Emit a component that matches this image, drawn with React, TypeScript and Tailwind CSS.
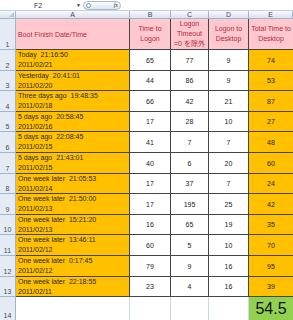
import { } from 'react'

type Row = {
  n: number
  label: string
  date: string
  logon: number
  timeout: number
  desktop: number
  total: number
  tall: boolean
}

const rows: Row[] = [
  { n: 2, label: 'Today  21:16:50', date: '2011/02/21', logon: 65, timeout: 77, desktop: 9, total: 74, tall: true },
  { n: 3, label: 'Yesterday  20:41:01', date: '2011/02/20', logon: 44, timeout: 86, desktop: 9, total: 53, tall: false },
  { n: 4, label: 'Three days ago  19:48:35', date: '2011/02/18', logon: 66, timeout: 42, desktop: 21, total: 87, tall: true },
  { n: 5, label: '5 days ago  20:58:45', date: '2011/02/16', logon: 17, timeout: 28, desktop: 10, total: 27, tall: false },
  { n: 6, label: '5 days ago  22:08:45', date: '2011/02/15', logon: 41, timeout: 7, desktop: 7, total: 48, tall: true },
  { n: 7, label: '5 days ago  21:43:01', date: '2011/02/15', logon: 40, timeout: 6, desktop: 20, total: 60, tall: true },
  { n: 8, label: 'One week later  21:05:53', date: '2011/02/14', logon: 17, timeout: 37, desktop: 7, total: 24, tall: false },
  { n: 9, label: 'One week later  21:50:00', date: '2011/02/13', logon: 17, timeout: 195, desktop: 25, total: 42, tall: true },
  { n: 10, label: 'One week later  15:21:20', date: '2011/02/13', logon: 16, timeout: 65, desktop: 19, total: 35, tall: false },
  { n: 11, label: 'One week later  13:46:11', date: '2011/02/12', logon: 60, timeout: 5, desktop: 10, total: 70, tall: true },
  { n: 12, label: 'One week later  0:17:45', date: '2011/02/12', logon: 79, timeout: 9, desktop: 16, total: 95, tall: true },
  { n: 13, label: 'One week later  22:18:55', date: '2011/02/11', logon: 23, timeout: 4, desktop: 16, total: 39, tall: false },
]

const cols = 'grid grid-cols-[16px_114px_41px_38px_40px_44px]'
const rowHead = 'flex items-end justify-center pb-[1px] bg-[#E4EBF5] border-r border-b border-[#9EB6CE] text-[7px] text-[#4a4a4a]'
const dataCell = 'flex items-center justify-center border-r border-b border-[#454545] text-[7px] text-[#222]'
const headCell = 'flex items-center justify-center text-center bg-[#FFC7CE] border-r border-b border-[#454545] text-[7px] leading-[10px] text-[#B5283A]'

export default function App() {
  return (
    <div className="w-[293px] h-[320px] overflow-hidden bg-white font-['Liberation_Sans','Noto_Sans_CJK_JP',sans-serif] leading-none">
      {/* Formula bar */}
      <div className="h-[11px] flex items-center bg-white border-b border-[#C5D1DE]">
        <div className="w-[76px] text-center text-[7px] text-[#333]">F2</div>
        <div className="w-[6px] text-[5px] text-[#333]">▼</div>
        <div className="ml-[1px] w-[38px] h-[9px] rounded-full border border-[#A9B8CA] bg-gradient-to-b from-[#FFFFFF] to-[#DCE4EE] flex items-center justify-between px-[2px]">
          <div className="w-[5px] h-[5px] rounded-full border border-[#7D8FA6] bg-white" />
          <span className="italic text-[6px] text-[#333] font-['Liberation_Serif',serif]">fx</span>
        </div>
      </div>

      {/* Column headers */}
      <div className={`${cols} h-[8px] text-[7px] text-[#3B4A5C]`}>
        <div className="relative border-r border-b border-[#9EB6CE] bg-gradient-to-b from-[#F4F7FB] to-[#DCE3EC]">
          <div className="absolute right-[1px] bottom-[1px] w-0 h-0 border-l-[5px] border-l-transparent border-b-[5px] border-b-[#B8C5D5]" />
        </div>
        {['A', 'B', 'C', 'D', 'E'].map((c) => (
          <div
            key={c}
            className="flex items-center justify-center border-r border-b border-[#9EB6CE] bg-gradient-to-b from-[#F8FAFC] to-[#DAE2EC]"
          >
            {c}
          </div>
        ))}
      </div>

      {/* Row 1 header */}
      <div className={`${cols} h-[31px]`}>
        <div className={rowHead}>1</div>
        <div className="flex items-center pl-[2px] bg-[#FFC7CE] border-r border-b border-[#454545] text-[7px] text-[#B5283A]">
          Boot Finish Date/Time
        </div>
        <div className={headCell}>
          Time to<br />Logon
        </div>
        <div className={headCell}>
          Logon<br />Timeout<br />=0 を除外
        </div>
        <div className={headCell}>
          Logon to<br />Desktop
        </div>
        <div className={`${headCell} border-r-0 whitespace-nowrap`}>
          Total Time to<br />Desktop
        </div>
      </div>

      {/* Data rows */}
      {rows.map((r) => (
        <div key={r.n} className={`${cols} ${r.tall ? 'h-[21px]' : 'h-[20px]'}`}>
          <div className={rowHead}>{r.n}</div>
          <div className="flex flex-col justify-start overflow-hidden pl-[2px] bg-[#FFC000] border-r border-b border-[#454545] text-[7px] leading-[10px] text-[#2a2a2a] whitespace-pre">
            <span>{r.label}</span>
            <span>{r.date}</span>
          </div>
          <div className={dataCell}>{r.logon}</div>
          <div className={dataCell}>{r.timeout}</div>
          <div className={dataCell}>{r.desktop}</div>
          <div className="flex items-center justify-center bg-[#FFC000] border-b border-[#454545] text-[7px] text-[#222]">
            {r.total}
          </div>
        </div>
      ))}

      {/* Row 14 */}
      <div className={`${cols} h-[24px]`}>
        <div className={rowHead}>14</div>
        <div className="border-r border-b border-[#D0D7E5]" />
        <div className="border-r border-b border-[#D0D7E5]" />
        <div className="border-r border-b border-[#D0D7E5]" />
        <div className="border-r border-b border-[#D0D7E5]" />
        <div className="flex items-center justify-center bg-[#92D050] text-[16px] text-[#111]">54.5</div>
      </div>
    </div>
  )
}
